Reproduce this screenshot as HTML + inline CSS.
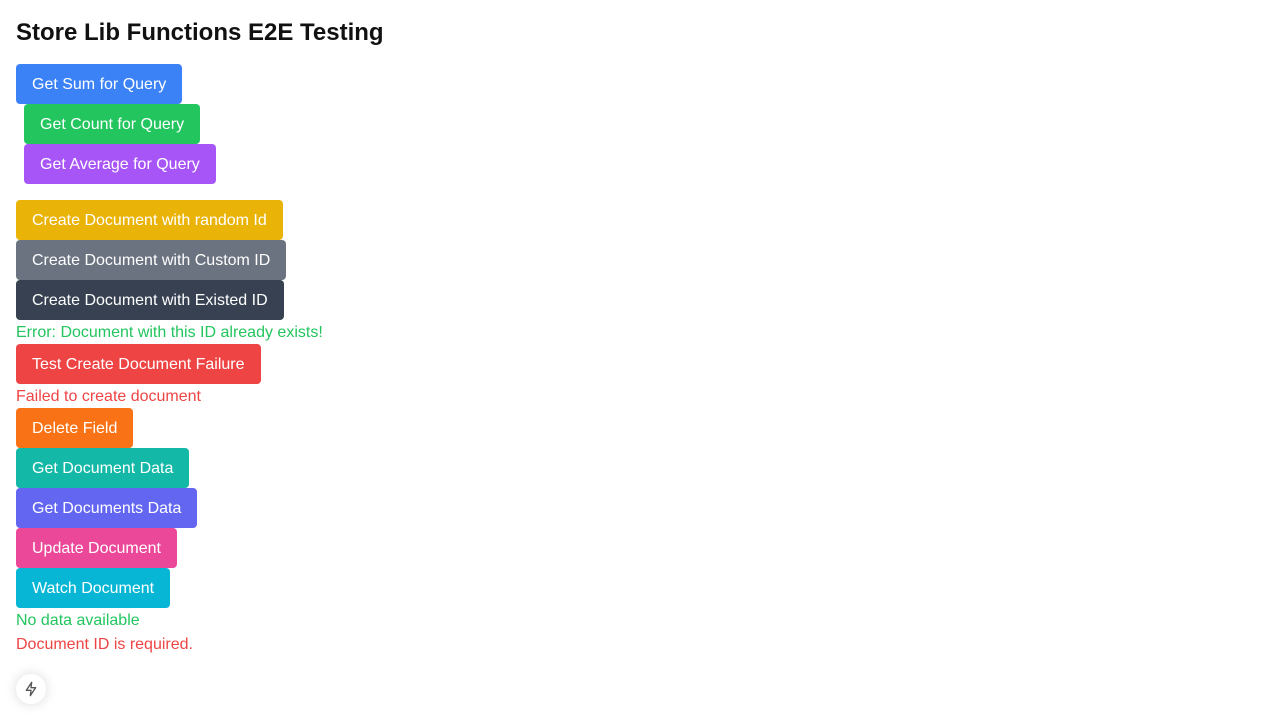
<!DOCTYPE html>
<html><head><style>
body{margin:0;background:#fff;font-family:"Liberation Sans",sans-serif;}
h1{position:absolute;left:16px;top:17px;margin:0;font-size:24px;line-height:32px;font-weight:bold;color:#111;}
.b{position:absolute;height:40px;line-height:42px;padding:0 16px;color:#fff;font-size:16px;border-radius:4px;white-space:nowrap;box-sizing:border-box;}
.t{position:absolute;left:16px;font-size:16px;line-height:26px;}
</style></head><body>
<h1>Store Lib Functions E2E Testing</h1>
<div class="b" style="left:16px;top:64px;background:#3b82f6">Get Sum for Query</div>
<div class="b" style="left:24px;top:104px;background:#22c55e">Get Count for Query</div>
<div class="b" style="left:24px;top:144px;background:#a855f7">Get Average for Query</div>
<div class="b" style="left:16px;top:200px;background:#eab308">Create Document with random Id</div>
<div class="b" style="left:16px;top:240px;background:#6b7280">Create Document with Custom ID</div>
<div class="b" style="left:16px;top:280px;background:#374151">Create Document with Existed ID</div>
<div class="t" style="top:320px;color:#22c55e">Error: Document with this ID already exists!</div>
<div class="b" style="left:16px;top:344px;background:#ef4444">Test Create Document Failure</div>
<div class="t" style="top:384px;color:#ef4444">Failed to create document</div>
<div class="b" style="left:16px;top:408px;background:#f97316">Delete Field</div>
<div class="b" style="left:16px;top:448px;background:#14b8a6">Get Document Data</div>
<div class="b" style="left:16px;top:488px;background:#6366f1">Get Documents Data</div>
<div class="b" style="left:16px;top:528px;background:#ec4899">Update Document</div>
<div class="b" style="left:16px;top:568px;background:#06b6d4">Watch Document</div>
<div class="t" style="top:608px;color:#22c55e">No data available</div>
<div class="t" style="top:632px;color:#ef4444">Document ID is required.</div>
<div style="position:absolute;left:16px;top:674px;width:30px;height:30px;border-radius:50%;background:#fff;box-shadow:0 0 12px rgba(0,0,0,0.15);display:flex;align-items:center;justify-content:center">
<svg width="16" height="16" viewBox="0 0 24 24" fill="none" stroke="#555" stroke-width="2" stroke-linejoin="round"><path d="M13 2L5 14h7l-1 8 8-12h-7z"/></svg>
</div>
</body></html>
